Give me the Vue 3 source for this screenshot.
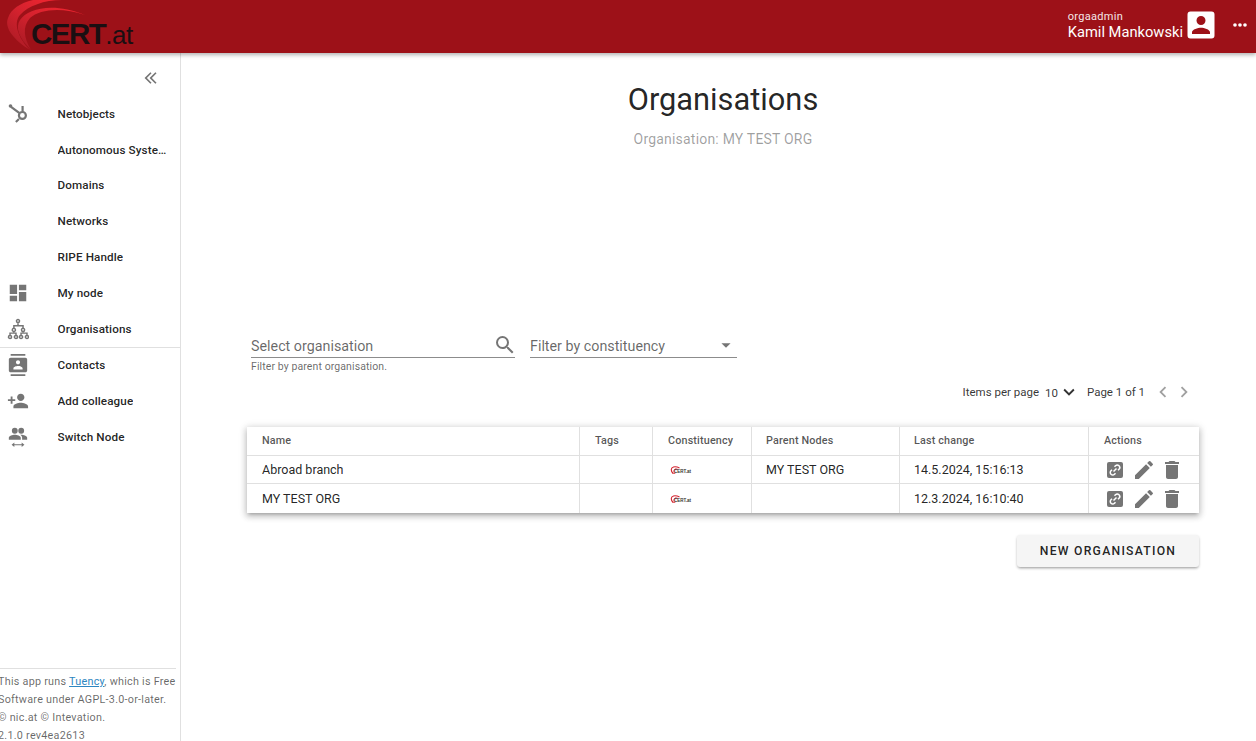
<template>
  <div class="app">
    <header class="topbar">
      <div class="logo">
        <svg class="logo-arcs" width="100" height="53" viewBox="0 0 100 53">
          <defs>
            <linearGradient id="arcfade" x1="0.1" y1="1" x2="0.9" y2="0.1">
              <stop offset="0" stop-color="#a81a24" />
              <stop offset="0.55" stop-color="#d4222e" />
              <stop offset="1" stop-color="#ee2530" />
            </linearGradient>
          </defs>
          <path d="M30 50C14 40 4 28 8 18 11 9 20 3 33 0H62C44 0 28 6 20 15 13 23 18 38 30 50Z" fill="url(#arcfade)" />
          <path d="M31 50C19 38 15 28 20 20 28 8 54 2 85 15 62 7 40 9 30 18 22 27 24 38 31 50Z" fill="url(#arcfade)" />
        </svg>
        <span class="logo-text">CERT<span class="logo-thin">.at</span></span>
      </div>
      <div class="user">
        <div class="user-text">
          <div class="user-role">orgaadmin</div>
          <div class="user-name">Kamil Mankowski</div>
        </div>
        <svg class="user-icon" width="36" height="36" viewBox="0 0 24 24" fill="#fff">
          <path d="M3 5v14a2 2 0 0 0 2 2h14a2 2 0 0 0 2-2V5a2 2 0 0 0-2-2H5a2 2 0 0 0-2 2zm12 4a3 3 0 1 1-6 0 3 3 0 0 1 6 0zm-9 8c0-2 4-3.100 6-3.100s6 1.100 6 3.100v1H6v-1z" />
        </svg>
        <svg class="dots" width="20" height="20" viewBox="0 0 24 24" fill="#fff">
          <circle cx="6" cy="12" r="2.200" /><circle cx="12" cy="12" r="2.200" /><circle cx="18" cy="12" r="2.200" />
        </svg>
      </div>
    </header>

    <div class="body">
      <aside class="sidebar">
        <div class="collapse">
          <svg width="20" height="20" viewBox="0 0 24 24" fill="#757575">
            <path d="M11.460 17.590 10.050 19l-7-7 7-7 1.410 1.410L5.880 12zM17.460 17.590 16.050 19l-7-7 7-7 1.410 1.410L11.880 12z" />
          </svg>
        </div>
        <nav>
          <div v-for="item in navItems" :key="item.label" class="nav-item" :class="{ divided: item.divided }">
            <span class="nav-icon">
              <svg
                v-if="item.icon"
                width="22"
                height="22"
                viewBox="0 0 24 24"
                :fill="item.stroked ? 'none' : '#757575'"
                :stroke="item.stroked ? '#757575' : 'none'"
                :stroke-width="item.stroked"
              >
                <path :d="item.icon" />
              </svg>
            </span>
            <span class="nav-label">{{ item.label }}</span>
          </div>
        </nav>
        <div class="footer">
          This app runs <a class="footer-link">Tuency</a>, which is Free Software under AGPL-3.0-or-later.<br />
          © nic.at © Intevation.<br />
          2.1.0 rev4ea2613
        </div>
      </aside>

      <main class="content">
        <h1 class="title">Organisations</h1>
        <div class="subtitle">Organisation: MY TEST ORG</div>

        <div class="filters">
          <div class="field field-org">
            <div class="field-line">
              <span>Select organisation</span>
              <svg width="24" height="24" viewBox="0 0 24 24" fill="#757575">
                <path d="M15.500 14h-.79l-.28-.27A6.470 6.470 0 0 0 16 9.500 6.500 6.500 0 1 0 9.500 16c1.610 0 3.090-.59 4.230-1.570l.27.28v.79l5 4.990L20.490 19l-4.990-5zm-6 0C7.010 14 5 11.990 5 9.500S7.010 5 9.500 5 14 7.010 14 9.500 11.990 14 9.500 14z" />
              </svg>
            </div>
            <div class="field-hint">Filter by parent organisation.</div>
          </div>
          <div class="field field-constituency">
            <div class="field-line">
              <span>Filter by constituency</span>
              <svg width="22" height="22" viewBox="0 0 24 24" fill="#757575">
                <path d="M7 10l5 5 5-5z" />
              </svg>
            </div>
          </div>
        </div>

        <div class="pager">
          <span>Items per page</span>
          <span class="pager-size">10</span>
          <svg width="22" height="22" viewBox="0 0 24 24" fill="#333">
            <path d="M7.410 8.590 12 13.170l4.590-4.580L18 10l-6 6-6-6z" />
          </svg>
          <span class="pager-page">Page 1 of 1</span>
          <svg width="22" height="22" viewBox="0 0 24 24" fill="#a0a0a0">
            <path d="M15.410 7.410 14 6l-6 6 6 6 1.410-1.410L10.830 12z" />
          </svg>
          <svg class="pager-next" width="22" height="22" viewBox="0 0 24 24" fill="#a0a0a0">
            <path d="M8.590 16.590 10 18l6-6-6-6-1.410 1.410L13.170 12z" />
          </svg>
        </div>

        <div class="table-card">
          <div class="row head">
            <div class="cell">Name</div>
            <div class="cell">Tags</div>
            <div class="cell">Constituency</div>
            <div class="cell">Parent Nodes</div>
            <div class="cell">Last change</div>
            <div class="cell">Actions</div>
          </div>
          <div v-for="org in organisations" :key="org.name" class="row">
            <div class="cell">{{ org.name }}</div>
            <div class="cell"></div>
            <div class="cell">
              <span class="mini-logo">
                <svg width="10" height="8" viewBox="0 0 10 8" fill="none" stroke="#d3222e">
                  <path d="M3.500 8C.5 5 .5 2 3.500 1 5.500.5 7.500 1 9.500 2" stroke-width="1.100" />
                  <path d="M5 8C3.500 6 3.500 4 5 3 6 2.800 7 3 8 3.500" stroke-width="0.900" />
                </svg>
                <span class="mini-text">CERT.at</span>
              </span>
            </div>
            <div class="cell">{{ org.parent }}</div>
            <div class="cell">{{ org.changed }}</div>
            <div class="cell actions">
              <svg width="20" height="20" viewBox="0 0 20 20">
                <rect x="2" y="2" width="16" height="16" rx="2" fill="#757575" />
                <path d="M8.500 11.500l3-3M9.500 6.800l1-1a2.400 2.400 0 0 1 3.500 3.500l-1 1M10.500 13.200l-1 1a2.400 2.400 0 0 1-3.500-3.500l1-1" fill="none" stroke="#fff" stroke-width="1.500" />
              </svg>
              <svg class="action-edit" width="24" height="24" viewBox="0 0 24 24" fill="#757575">
                <path d="M3 17.250V21h3.750L17.810 9.940l-3.750-3.750L3 17.250zM20.710 7.040a1 1 0 0 0 0-1.410l-2.340-2.340a1 1 0 0 0-1.410 0l-1.830 1.830 3.750 3.750 1.830-1.830z" />
              </svg>
              <svg class="action-delete" width="24" height="24" viewBox="0 0 24 24" fill="#757575">
                <path d="M6 19c0 1.100.9 2 2 2h8c1.100 0 2-.9 2-2V7H6v12zM19 4h-3.500l-1-1h-5l-1 1H5v2h14V4z" />
              </svg>
            </div>
          </div>
        </div>

        <div class="button-row">
          <button class="new-button" type="button">NEW ORGANISATION</button>
        </div>
      </main>
    </div>
  </div>
</template>

<script setup>
const navItems = [
  {
    label: 'Netobjects',
    stroked: 2.400,
    icon: 'M13 13.600a3.800 3.800 0 1 0 7.600 0a3.800 3.800 0 1 0-7.600 0M17 9.800V3.300M3.300 3.300l10 7.500M13 17.500l-3.300 3.200M3 3.300a.8.8 0 1 0 1.600 0a.8.8 0 1 0-1.600 0',
  },
  { label: 'Autonomous Systems' },
  { label: 'Domains' },
  { label: 'Networks' },
  { label: 'RIPE Handle' },
  { label: 'My node', icon: 'M3 13h8V3H3v10zm0 8h8v-6H3v6zm10 0h8V11h-8v10zm0-18v6h8V3h-8z' },
  {
    label: 'Organisations',
    stroked: 1.600,
    icon: 'M10.300 3.300a1.700 1.700 0 1 0 3.400 0a1.700 1.700 0 1 0-3.400 0M12 5V8.500M7.500 11.300V8.500H17.500V11.300M5.800 13a1.700 1.700 0 1 0 3.400 0a1.700 1.700 0 1 0-3.400 0M15.800 13a1.700 1.700 0 1 0 3.400 0a1.700 1.700 0 1 0-3.400 0M7.500 14.700V16.500M3.300 19V16.500H9.800V19M17.500 14.700V16.500M15.300 19V16.500H21.800V19M1.600 20.700a1.700 1.700 0 1 0 3.400 0a1.700 1.700 0 1 0-3.400 0M8.100 20.700a1.700 1.700 0 1 0 3.400 0a1.700 1.700 0 1 0-3.400 0M13.600 20.700a1.700 1.700 0 1 0 3.400 0a1.700 1.700 0 1 0-3.400 0M20.100 20.700a1.700 1.700 0 1 0 3.400 0a1.700 1.700 0 1 0-3.400 0',
  },
  {
    label: 'Contacts',
    divided: true,
    icon: 'M20 0H4v2h16V0zM4 24h16v-2H4v2zM20 4H4c-1.100 0-2 .9-2 2v12c0 1.100.9 2 2 2h16c1.100 0 2-.9 2-2V6c0-1.100-.9-2-2-2zm-8 2.750c1.240 0 2.250 1.010 2.250 2.250s-1.010 2.250-2.250 2.250S9.750 10.240 9.750 9 10.760 6.750 12 6.750zM17 17H7v-1.500c0-1.670 3.330-2.500 5-2.500s5 .83 5 2.500V17z',
  },
  { label: 'Add colleague', icon: 'M15 12c2.210 0 4-1.790 4-4s-1.790-4-4-4-4 1.790-4 4 1.790 4 4 4zm-9-2V7H4v3H1v2h3v3h2v-3h3v-2H6zm9 4c-2.670 0-8 1.340-8 4v2h16v-2c0-2.660-5.330-4-8-4z' },
  {
    label: 'Switch Node',
    icon: 'M8.500 2a3.200 3.200 0 1 1 0 6.400 3.200 3.200 0 0 1 0-6.400zm7 0a3.200 3.200 0 1 1 0 6.400 3.200 3.200 0 0 1 0-6.400zM8.500 9.500c-2.300 0-6.500 1.100-6.500 3.300V15h13v-2.200c0-2.200-4.200-3.300-6.500-3.300zm7 0c-.4 0-.8 0-1.200.1 1.300.8 2.200 1.900 2.200 3.200V15H22v-2.200c0-2.200-4.200-3.300-6.500-3.300zM8 18l-3 2.500L8 23v-2h8v2l3-2.500-3-2.500v2H8v-2z',
  },
]

const organisations = [
  { name: 'Abroad branch', parent: 'MY TEST ORG', changed: '14.5.2024, 15:16:13' },
  { name: 'MY TEST ORG', parent: '', changed: '12.3.2024, 16:10:40' },
]
</script>

<style>
html,
body {
  margin: 0;
  overflow: hidden;
  background: #fff;
}
</style>

<style scoped>
.app {
  height: 741px;
  display: flex;
  flex-direction: column;
  font-family: Roboto, "Liberation Sans", sans-serif;
  color: rgba(0, 0, 0, 0.87);
  overflow: hidden;
}

.topbar {
  height: 53px;
  flex: none;
  background: #9d1118;
  display: flex;
  justify-content: space-between;
  align-items: center;
  box-shadow: 0 2px 4px rgba(0, 0, 0, 0.3);
  position: relative;
  z-index: 2;
}

.logo {
  position: relative;
  width: 140px;
  height: 53px;
  overflow: hidden;
}

.logo-arcs {
  position: absolute;
  left: 0;
  top: 0;
}

.logo-text {
  position: absolute;
  left: 31px;
  top: 18px;
  font-family: "Liberation Sans", Arial, sans-serif;
  font-weight: 700;
  font-size: 29.500px;
  line-height: 32px;
  letter-spacing: -1.500px;
  color: #1a0f12;
}

.logo-thin {
  font-weight: 400;
  font-size: 26px;
  letter-spacing: -0.500px;
}

.user {
  display: flex;
  align-items: center;
  color: #fff;
  padding-right: 6px;
}

.user-text {
  line-height: 1;
  margin-bottom: 2px;
}

.user-role {
  font-size: 11px;
  letter-spacing: 0.3px;
  opacity: 0.9;
}

.user-name {
  font-size: 14.700px;
  margin-top: 3px;
}

.user-icon {
  margin-top: -4px;
}

.dots {
  margin: -3px 0 0 11px;
}

.body {
  flex: 1;
  display: flex;
  min-height: 0;
}

.sidebar {
  width: 180px;
  flex: none;
  border-right: 1px solid #e0e0e0;
  display: flex;
  flex-direction: column;
  overflow: hidden;
}

.collapse {
  display: flex;
  justify-content: flex-end;
  padding: 15px 18px 0 0;
  height: 28px;
}

nav {
  flex: 1;
}

.nav-item {
  height: 35.800px;
  display: flex;
  align-items: center;
}

.nav-item.divided {
  border-top: 1px solid #e0e0e0;
}

.nav-icon {
  width: 57.500px;
  padding-left: 7px;
  box-sizing: border-box;
  flex: none;
  display: flex;
}

.nav-label {
  max-width: 110px;
  font-size: 11.700px;
  font-weight: 500;
  white-space: nowrap;
  overflow: hidden;
  text-overflow: ellipsis;
  letter-spacing: 0.1px;
}

.footer {
  border-top: 1px solid #e0e0e0;
  margin: 0 4px 0 -2px;
  padding-top: 4px;
  height: 68px;
  font-size: 10.800px;
  line-height: 18px;
  letter-spacing: 0.25px;
  color: rgba(0, 0, 0, 0.6);
}

.footer-link {
  color: #2e86c1;
  text-decoration: underline;
}

.content {
  flex: 1;
  min-width: 0;
  padding: 0 57px 0 66px;
}

.title {
  margin: 27px 0 0;
  font-size: 30.800px;
  font-weight: 400;
  line-height: 40px;
  text-align: center;
}

.subtitle {
  margin-top: 9px;
  font-size: 14px;
  line-height: 20px;
  text-align: center;
  letter-spacing: 0.2px;
  color: rgba(0, 0, 0, 0.38);
}

.filters {
  margin-top: 180px;
  margin-left: 4px;
  display: flex;
  gap: 15px;
  align-items: flex-start;
}

.field-org {
  width: 264px;
}

.field-constituency {
  width: 207px;
}

.field-line {
  height: 28px;
  display: flex;
  align-items: flex-end;
  justify-content: space-between;
  border-bottom: 1px solid #8c8c8c;
  font-size: 14.300px;
  line-height: 22px;
  color: rgba(0, 0, 0, 0.6);
}

.field-line svg {
  margin: 0 0 1px 0;
}

.field-org svg {
  margin: 0;
  transform: translateX(2px);
}

.field-hint {
  margin-top: 2px;
  font-size: 10.500px;
  line-height: 14px;
  letter-spacing: 0.1px;
  color: rgba(0, 0, 0, 0.6);
}

.pager {
  display: flex;
  justify-content: flex-end;
  align-items: center;
  height: 24px;
  margin-top: 6px;
  padding-right: 4px;
  font-size: 11.500px;
  color: rgba(0, 0, 0, 0.8);
}

.pager-size {
  margin-left: 6px;
  padding-top: 2px;
}

.pager-page {
  margin: 0 7px 0 7px;
}

.pager-next {
  margin-left: -1px;
}

.table-card {
  margin-top: 23px;
  background: #fff;
  box-shadow: 0 3px 3px -2px rgba(0, 0, 0, 0.2), 0 3px 6px 1px rgba(0, 0, 0, 0.16), 0 1px 8px 1px rgba(0, 0, 0, 0.12);
}

.row {
  display: grid;
  grid-template-columns: 333px 73px 99px 148px 189px 1fr;
  box-sizing: border-box;
  height: 28px;
  border-top: 1px solid #e0e0e0;
  font-size: 12.500px;
}

.row:last-child {
  height: 30px;
}

.row.head {
  border-top: 0;
  height: 28px;
  font-size: 10.800px;
  font-weight: 500;
  letter-spacing: 0.15px;
  color: rgba(0, 0, 0, 0.68);
}

.row.head .cell {
  padding-bottom: 2px;
  box-sizing: border-box;
}

.cell {
  display: flex;
  align-items: center;
  padding-left: 15px;
  border-right: 1px solid #e0e0e0;
  white-space: nowrap;
}

.cell:nth-child(4),
.cell:nth-child(5) {
  padding-left: 14px;
}

.cell:last-child {
  border-right: 0;
}

.mini-logo {
  display: flex;
  align-items: flex-end;
  margin-left: 2px;
}

.mini-text {
  font-family: "Liberation Sans", Arial, sans-serif;
  font-size: 4.500px;
  font-weight: 700;
  line-height: 5px;
  margin-left: -6px;
  color: #333;
}

.actions {
  padding-left: 16px;
}

.action-edit {
  margin-left: 7px;
}

.action-delete {
  margin-left: 4px;
}

.button-row {
  display: flex;
  justify-content: flex-end;
  margin-top: 22px;
}

.new-button {
  width: 182px;
  height: 32px;
  border: 0;
  border-radius: 3px;
  background: #f5f5f5;
  font-family: inherit;
  font-size: 12.200px;
  font-weight: 500;
  letter-spacing: 1.250px;
  color: rgba(0, 0, 0, 0.87);
  box-shadow: 0 2px 3px -1px rgba(0, 0, 0, 0.3), 0 1px 3px rgba(0, 0, 0, 0.15);
}
</style>
